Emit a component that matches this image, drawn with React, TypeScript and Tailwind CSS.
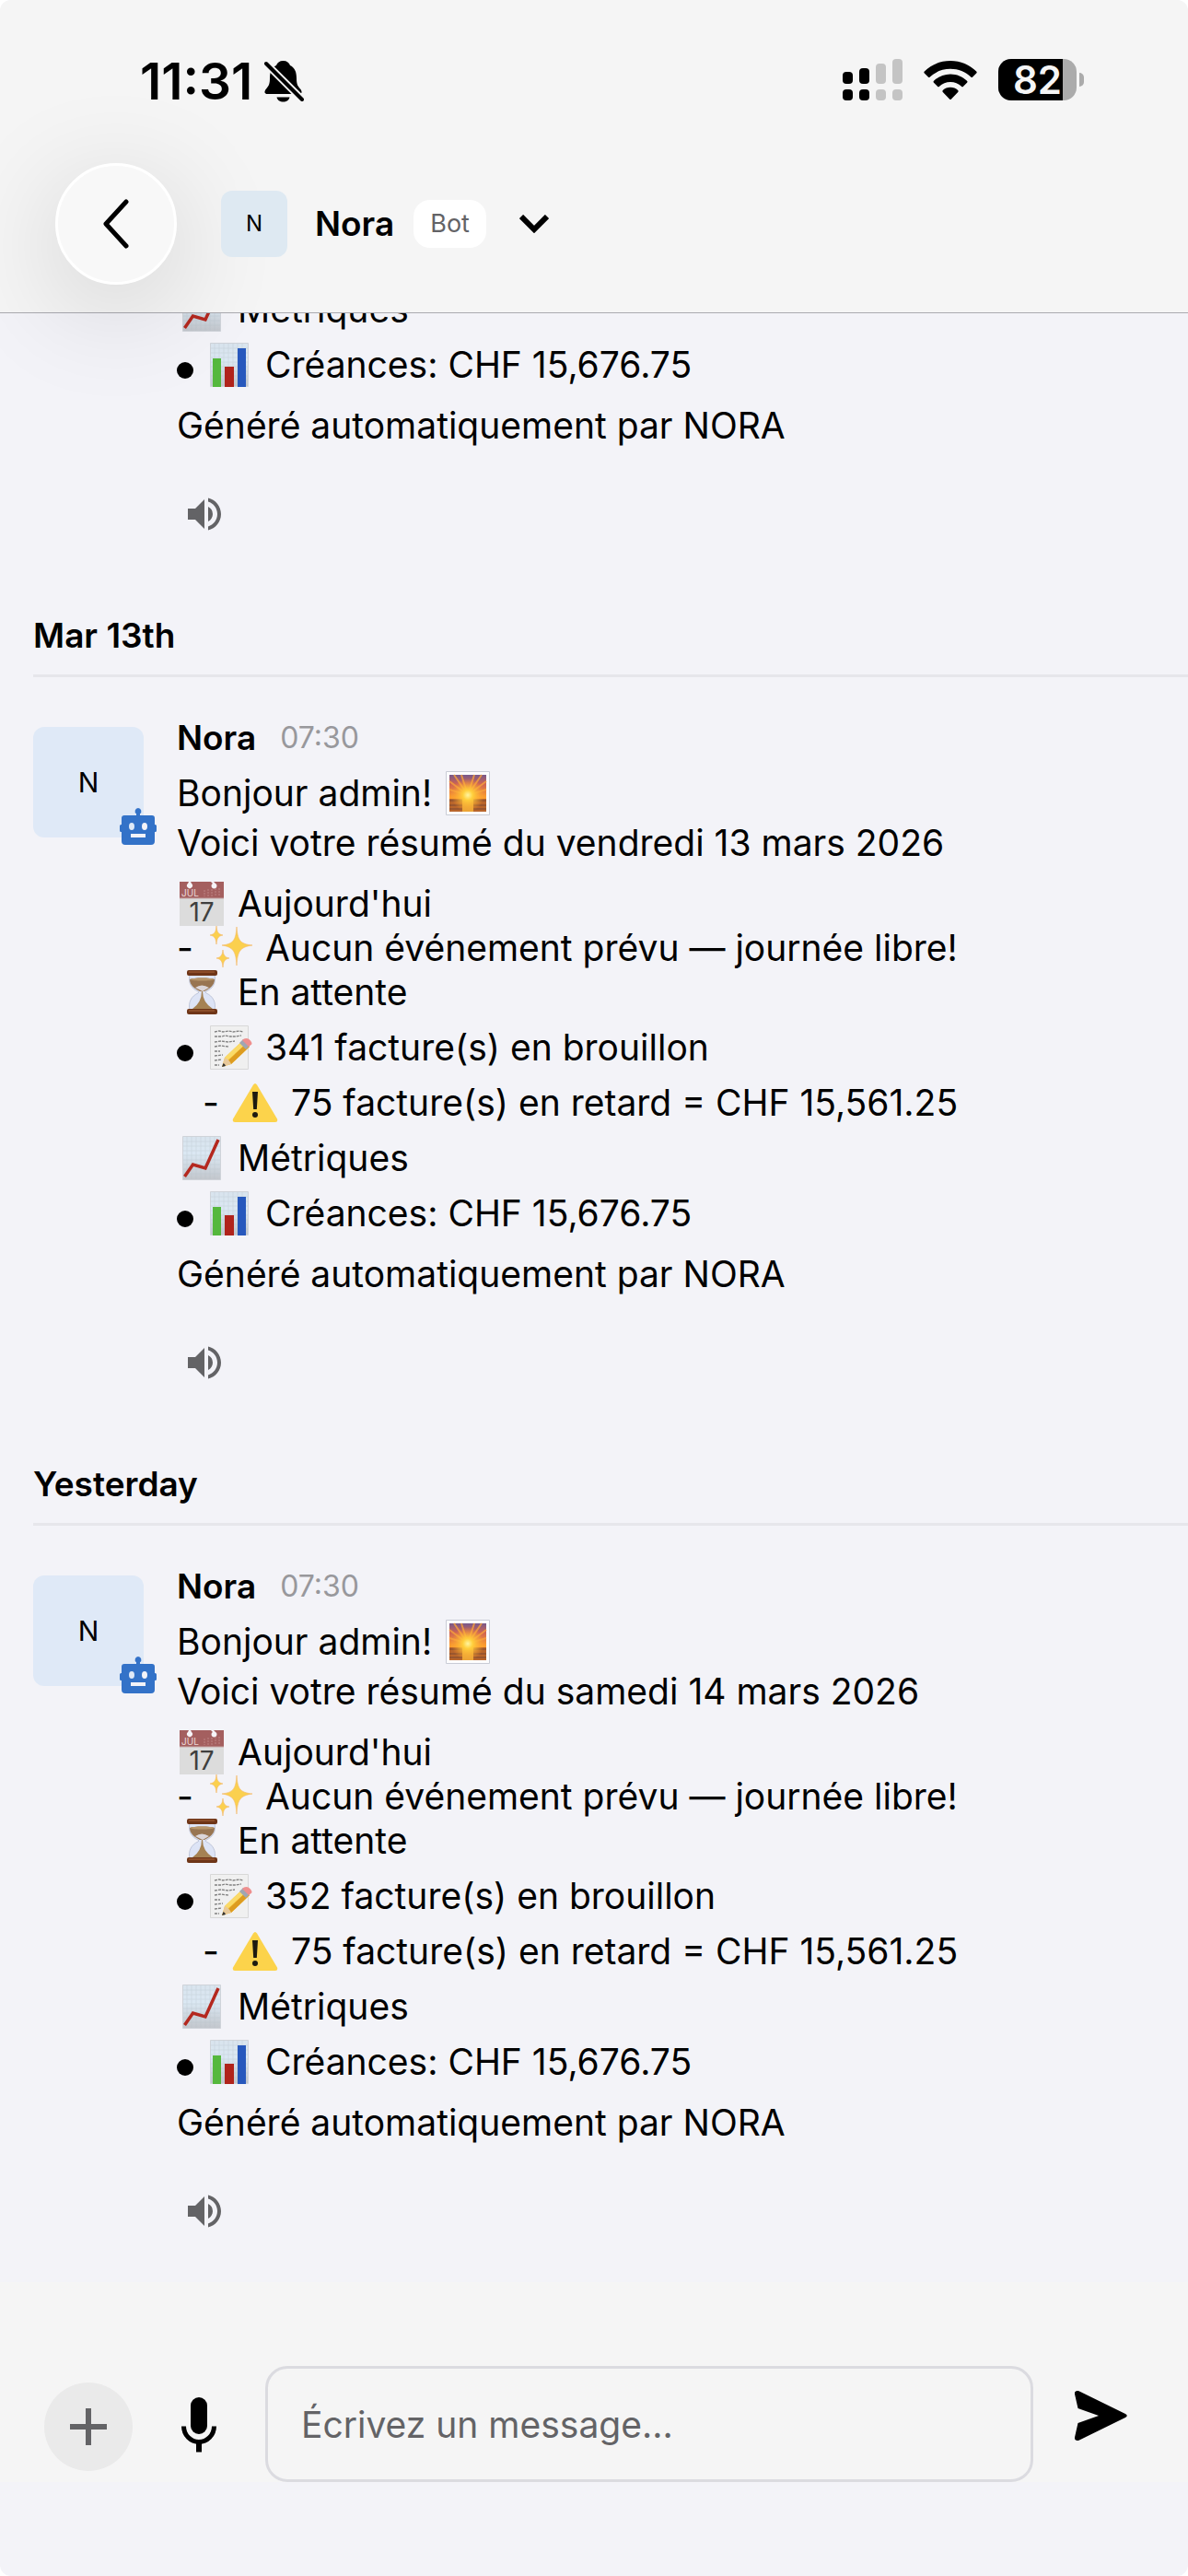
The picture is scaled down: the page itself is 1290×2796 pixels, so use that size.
import type { ReactNode } from "react";
import { MdVolumeUp } from "react-icons/md";

type EmojiName =
  | "sunrise"
  | "calendar"
  | "sparkles"
  | "hourglass"
  | "memo"
  | "warning"
  | "trend"
  | "bars";

type Report = {
  day: string;
  date: string;
  drafts: number;
};

const reports: Report[] = [
  { day: "Mar 13th", date: "vendredi 13 mars 2026", drafts: 341 },
  { day: "Yesterday", date: "samedi 14 mars 2026", drafts: 352 },
];

export default function App() {
  return (
    <div className="bg-white font-['Inter',sans-serif] text-black">
      <div className="flex h-screen flex-col overflow-hidden rounded-xl bg-[#f3f3f8]">
        <Header />

        {/* Message list, pinned to the newest entry */}
        <main className="flex min-h-0 flex-1 flex-col justify-end overflow-hidden pb-[53px]">
          <div className="shrink-0 pl-[192px]">
            <Metrics />
          </div>
          {reports.map((report) => (
            <section key={report.day} className="shrink-0 pl-9 pt-[84px]">
              <h2 className="border-b-3 border-[#e6e6eb] pb-[18px] text-[37px] font-semibold leading-[48px]">
                {report.day}
              </h2>
              <Message report={report} />
            </section>
          ))}
        </main>

        <Composer />
      </div>
    </div>
  );
}

function Header() {
  return (
    <header className="relative z-10 shrink-0 border-b border-[#aaaab0] bg-[#f5f5f5] pb-[30px]">
      <div className="flex h-[177px] items-start justify-between pl-[152px] pr-[113px] pt-16">
        <div className="flex items-center gap-3">
          <span className="text-[55px] font-semibold leading-[48px]">11:31</span>
          <BellOff />
        </div>
        <div className="flex items-center gap-[23px]">
          <Signal />
          <Wifi />
          <Battery level={82} />
        </div>
      </div>

      <div className="flex items-center pl-[60px]">
        <button
          type="button"
          aria-label="Retour"
          className="flex size-[132px] items-center justify-center rounded-full border-3 border-white bg-[#f8f8f8] shadow-[0_24px_120px_rgba(0,0,0,0.16)]"
        >
          <svg viewBox="0 0 30 54" className="h-[54px] w-[30px]" fill="none" stroke="black" strokeWidth="5" strokeLinecap="round" strokeLinejoin="round">
            <path d="M26 3 4 27l22 24" />
          </svg>
        </button>
        <button type="button" className="ml-12 flex items-center">
          <span className="flex size-[72px] items-center justify-center rounded-xl bg-[#dee9f2] text-[24px]">
            N
          </span>
          <span className="ml-[30px] text-[37px] font-semibold leading-[48px]">Nora</span>
          <span className="ml-[21px] rounded-[18px] bg-white px-[18px] text-[27px] leading-[52px] text-[#636366]">
            Bot
          </span>
          <svg viewBox="0 0 32 20" className="ml-9 h-5 w-8" fill="none" stroke="black" strokeWidth="6">
            <path d="m2 2 14 14L30 2" />
          </svg>
        </button>
      </div>
    </header>
  );
}

function Message({ report }: { report: Report }) {
  return (
    <article className="flex gap-9 pt-[42px]">
      <div className="relative mt-3 flex size-[120px] shrink-0 items-center justify-center rounded-xl bg-[#dfe9f7] text-[30px]">
        N
        <Robot />
      </div>
      <div className="text-[39px] leading-[48px]">
        <p className="flex items-center gap-[26px] pb-3">
          <strong className="text-[37px] font-semibold">Nora</strong>
          <time className="text-[32px] text-[#98989c]">07:30</time>
        </p>
        <Line>
          Bonjour admin!
          <Emoji name="sunrise" />
        </Line>
        <p className="mt-1.5">Voici votre résumé du {report.date}</p>
        <div className="mt-[18px]">
          <Line>
            <Emoji name="calendar" />
            Aujourd'hui
          </Line>
          <Line>
            -
            <Emoji name="sparkles" />
            Aucun événement prévu — journée libre!
          </Line>
          <Line>
            <Emoji name="hourglass" />
            En attente
          </Line>
        </div>
        <div className="mt-3">
          <Line>
            <Bullet />
            <Emoji name="memo" />
            {report.drafts} facture(s) en brouillon
          </Line>
        </div>
        <div className="my-3 pl-7">
          <Line>
            -
            <Emoji name="warning" />
            75 facture(s) en retard = CHF 15,561.25
          </Line>
        </div>
        <Metrics />
      </div>
    </article>
  );
}

function Metrics() {
  return (
    <div className="text-[39px] leading-[48px]">
      <Line>
        <Emoji name="trend" />
        Métriques
      </Line>
      <div className="mt-3">
        <Line>
          <Bullet />
          <Emoji name="bars" />
          Créances: CHF 15,676.75
        </Line>
      </div>
      <p className="mt-[18px]">Généré automatiquement par NORA</p>
      <button type="button" aria-label="Écouter" className="mt-12 ml-1.5 block">
        <MdVolumeUp className="size-12 text-[#636366]" />
      </button>
    </div>
  );
}

function Line({ children }: { children: ReactNode }) {
  return <p className="flex h-12 items-center gap-3 whitespace-nowrap">{children}</p>;
}

function Bullet() {
  return (
    <span aria-hidden className="flex h-12 w-[18px] items-end pb-[9px]">
      <span className="size-[18px] rounded-full bg-black" />
    </span>
  );
}

function Composer() {
  return (
    <footer className="shrink-0 pb-[102px]">
      <form className="flex items-end bg-[#f5f5f5] pl-12 pr-[54px] pt-[91px]">
        <button
          type="button"
          aria-label="Ajouter"
          className="mb-3 flex size-24 items-center justify-center rounded-full bg-[#eaeaea]"
        >
          <svg viewBox="0 0 40 40" className="size-10" stroke="#636366" strokeWidth="6">
            <path d="M20 0v40M0 20h40" />
          </svg>
        </button>
        <button type="button" aria-label="Dicter" className="mb-8 ml-[52px]">
          <svg viewBox="0 0 40 60" className="h-[60px] w-10">
            <rect x="11" y="0" width="18" height="40" rx="9" />
            <path d="M3.500 31.500C3.500 41 11 48.500 20 48.500S36.500 41 36.500 31.500" fill="none" stroke="black" strokeWidth="5" />
            <path d="M17 49h6v10.500h-6z" />
          </svg>
        </button>
        <input
          type="text"
          aria-label="Message"
          placeholder="Écrivez un message..."
          className="ml-[52px] h-[126px] min-w-0 flex-1 rounded-3xl border-3 border-[#dbdbe0] bg-transparent px-9 text-[39px] outline-none placeholder:text-[#636366]"
        />
        <button type="submit" aria-label="Envoyer" className="mb-11 ml-8 px-3">
          <svg viewBox="0 0 58 56" className="h-14 w-[58px]">
            <path d="M1 4.500C.5 1.500 3 .3 5.500 1.300L56 26q3.500 2 0 4L5.500 54.700C3 55.700.5 54.500 1 51.500L4.500 36 27 28 4.500 20Z" />
          </svg>
        </button>
      </form>
    </footer>
  );
}

/* Status bar glyphs */

function BellOff() {
  return (
    <svg viewBox="0 0 44 46" className="h-[46px] w-11">
      <path d="M21.500 1c-4 0-6.500 2-7.500 5C8.500 8.500 7 14 7 20c0 6-1 8-4 11.500C.5 34.500 1 37 4.500 37h34c3.500 0 4-2.500 1.500-5.500-3-3.500-4-5.500-4-11.500 0-6-1.500-11.500-7-14-1-3-3.500-5-7.500-5Z" />
      <path d="M14.500 40.500h14c-.5 3-3.500 5-7 5s-6.500-2-7-5Z" />
      <path d="m3 4 39 39" stroke="#f5f5f5" strokeWidth="8" />
      <path d="m3 4 39 39" stroke="black" strokeWidth="4" strokeLinecap="round" />
    </svg>
  );
}

function Signal() {
  return (
    <svg viewBox="0 0 65 45" className="h-[45px] w-[65px]">
      <rect x="0" y="14" width="11" height="13" rx="4" />
      <rect x="18" y="10" width="11" height="17" rx="4" />
      <rect x="36" y="5" width="11" height="22" rx="4" fill="#c4c4c4" />
      <rect x="54" y="0" width="11" height="27" rx="4" fill="#c4c4c4" />
      <rect x="0" y="33" width="11" height="12" rx="4" />
      <rect x="18" y="33" width="11" height="12" rx="4" />
      <rect x="36" y="33" width="11" height="12" rx="4" fill="#c4c4c4" />
      <rect x="54" y="33" width="11" height="12" rx="4" fill="#c4c4c4" />
    </svg>
  );
}

function Wifi() {
  return (
    <svg viewBox="0 0 58 44" className="h-11 w-[58px]">
      <path d="M29 1C18 1 8 5.300.8 12.600q-1 1 0 2l4 4q1 1 2 0C12.600 13 20.300 9.800 29 9.800S45.400 13 51.200 18.600q1 1 2 0l4-4q1-1 0-2C50 5.300 40 1 29 1Z" />
      <path d="M29 15.500c-7 0-13.300 2.800-18 7.200q-1 1 0 2l4 4q1 1 2 0C20.200 25.800 24.400 24 29 24s8.800 1.800 12 4.700q1 1 2 0l4-4q1-1 0-2c-4.700-4.400-11-7.200-18-7.200Z" />
      <path d="M29 29.800c-3.200 0-6 1.200-8.200 3.200q-1 1 0 2l7.200 7.500q1 1 2 0l7.200-7.500q1-1 0-2c-2.200-2-5-3.200-8.200-3.200Z" />
    </svg>
  );
}

function Battery({ level }: { level: number }) {
  return (
    <div className="flex items-center gap-[3px]">
      <div className="relative w-[85px]">
        <div className="h-[45px] overflow-hidden rounded-[14px] bg-[#ababab]">
          <div className="h-full bg-black" style={{ width: `${level}%` }} />
        </div>
        <span className="absolute inset-0 flex items-center justify-center text-[42px] font-semibold leading-none text-[#f5f5f5]">
          {level}
        </span>
      </div>
      <div className="h-[15px] w-[5px] rounded-r-full bg-[#ababab]" />
    </div>
  );
}

function Robot() {
  return (
    <svg viewBox="0 0 40 40" className="absolute -bottom-2 -right-3.5 size-10">
      <path
        fill="#3372c8"
        fillRule="evenodd"
        d="M20 0a3.500 3.500 0 0 1 2 6.300V8h13a3 3 0 0 1 3 3v7h.5A1.500 1.500 0 0 1 40 19.500v5a1.500 1.500 0 0 1-1.500 1.500H38v10a4 4 0 0 1-4 4H6a4 4 0 0 1-4-4V26h-.5A1.500 1.500 0 0 1 0 24.500v-5A1.500 1.500 0 0 1 1.500 18H2v-7a3 3 0 0 1 3-3h13V6.300A3.500 3.500 0 0 1 20 0Z"
      />
      <ellipse cx="13" cy="20" rx="3" ry="4" fill="#dfe9f7" />
      <ellipse cx="27" cy="20" rx="3" ry="4" fill="#f3f3f8" />
      <path d="M12 28h16v4H12z" fill="#f3f3f8" />
    </svg>
  );
}

/* Inline emoji drawings, all on a 54 x 48 box */

const emojiArt: Record<EmojiName, ReactNode> = {
  sunrise: (
    <>
      <defs>
        <linearGradient id="sky" x1="0" y1="0" x2="0" y2="1">
          <stop offset="0" stopColor="#76598c" />
          <stop offset=".25" stopColor="#cf6352" />
          <stop offset=".6" stopColor="#fb9d2e" />
        </linearGradient>
        <radialGradient id="sun" cx=".5" cy=".55" r=".45">
          <stop offset="0" stopColor="#fff5a0" />
          <stop offset=".3" stopColor="#ffcf3c" />
          <stop offset="1" stopColor="#ffa62f" stopOpacity="0" />
        </radialGradient>
      </defs>
      <path d="M3.500.5h47v47h-47z" fill="#fdfdfe" stroke="#c9ccd6" />
      <path d="M7 4h40v40H7z" fill="url(#sky)" />
      <path d="M27 26 7 11M27 26 12 4M27 26 20 4M27 26l7-22M27 26 42 4M27 26l20-15M27 26 7 20M27 26l20-6" stroke="#f7a13b" strokeWidth="2" opacity=".8" />
      <path d="M7 30h40v14H7z" fill="#b8652c" />
      <path d="M7 32h40M7 37h40M7 41h40" stroke="#8f5231" strokeWidth="1.500" />
      <path d="M21 30h12v14H21z" fill="#eba537" />
      <path d="M7 4h40v40H7z" fill="url(#sun)" />
    </>
  ),
  calendar: (
    <>
      <path d="M3 0h48v48H3z" fill="#dcdcdc" />
      <path d="M3 0h48v18H3z" fill="#a45f5f" />
      <path d="M3 18h48" stroke="#c6a7a7" />
      <path d="M13 0h2l1 2a3 3 0 1 1-4 0ZM37 0h3l2 2a3 3 0 1 1-3 0Z" fill="#f6f4f8" />
      <path d="M30 9v7M34 8v8M38 8v8M42 7v9M46 7v9" stroke="#bd8585" strokeDasharray="2 1" />
      <text x="5" y="16" fontSize="10" fill="#ecd9d9">JUL</text>
      <text x="27" y="43" fontSize="28" textAnchor="middle" fill="#3f3f3f">17</text>
    </>
  ),
  sparkles: (
    <g transform="translate(5 0)" fill="#fbd04e" stroke="#f3b76a" strokeWidth=".6">
      <path d="M30 1c1 14 3 18.500 17 20-14 2-16 7-17 22-1-15-3-20-16-22 13-1.500 15-6 16-20Z" />
      <path d="M8 0c.6 6 1.500 9 7 10-5.500 1-6.400 4-7 10-.6-6-1.500-9-7-10C6.500 9 7.400 6 8 0Z" />
      <path d="M15 26c.6 5 1.500 8 7 9-5.500 1-6.400 4-7 10-.6-6-1.500-9-7-10 5.500-1 6.400-4 7-9Z" />
    </g>
  ),
  hourglass: (
    <>
      <path d="M14 5h27c2 9-2 15-9 18q-2 1 0 2c7 3 11 10 9 18H14c-2-8 2-15 9-18q2-1 0-2C16 20 12 14 14 5Z" fill="#dde4f6" stroke="#b5bdd2" strokeWidth=".8" />
      <path d="M14 10c4-2 23-2 27 0 0 6-5 10-11 13h-5c-6-3-11-7-11-13Z" fill="#987551" />
      <path d="M14 10c4-2 23-2 27 0-4 2-23 2-27 0Z" fill="#b8976c" />
      <path d="M28 23q0 12 11 19H17q10-7 10-19Z" fill="#a58253" />
      <path d="M20 19q7-5 15 0l-7 4Z" fill="#eceffb" opacity=".8" />
      <rect x="11" y="0" width="33" height="6" rx="2" fill="#6e3517" />
      <rect x="11" y="42" width="33" height="6" rx="2" fill="#6e3517" />
      <path d="M13 2h28M13 44h28" stroke="#a9673c" />
    </>
  ),
  memo: (
    <>
      <path d="M6.500.5h41v47h-41z" fill="#f0f0f0" stroke="#d8d8d8" />
      <path d="M11 7l5-1 4 1 6-1 5 1 7-1 4 1M11 12h8l3-1 6 1h6l6-1M11 18l7-1 8 1 7-1M11 23l6-1 9 1M11 28h6M11 33l9-1M11 38l8-1M11 43h5" fill="none" stroke="#808080" strokeWidth="1.300" strokeDasharray="3 1" />
      <path d="m19 45 3-10 20-19 7 7-20 19Z" fill="#f4c02f" />
      <path d="m22 35 3 3 20-18-3-4Z" fill="#fada68" />
      <path d="m29 42-4-3 20-19 4 3Z" fill="#dd9c20" />
      <path d="m19 45 3-10q5 2 7 7Z" fill="#e8c99a" />
      <path d="m19 45 1.500-4q2 1 2.500 3Z" fill="#333" />
      <path d="m38 19 4-4 7 7-4 4Z" fill="#9fa6b2" />
      <path d="m41 16 2-1.500q4-1.500 7 2t0 5L48 23Z" fill="#ee8f8e" />
    </>
  ),
  warning: (
    <>
      <path d="M25 4.500q2-3 4 0l22 37q1 3.500-2 3.500H5q-3 0-2-3.500Z" fill="#fcd34b" />
      <path d="M24 12h6l-1.200 19h-3.600Z" fill="#1d1b10" />
      <circle cx="27" cy="37" r="3" fill="#1d1b10" />
    </>
  ),
  trend: (
    <>
      <GridPaper />
      <path d="m8.500 44 9-13L31 35 45 4" fill="none" stroke="#b4281f" strokeWidth="3.500" />
    </>
  ),
  bars: (
    <>
      <GridPaper />
      <path d="M9 17h9v31H9z" fill="#55b83d" />
      <path d="M22 26h10v22H22z" fill="#b0231b" />
      <path d="M36 6h9v42h-9z" fill="#2758bd" />
    </>
  ),
};

function GridPaper() {
  return (
    <>
      <defs>
        <linearGradient id="paper" x1="0" y1="0" x2="0" y2="1">
          <stop offset="0" stopColor="#d9e4ee" />
          <stop offset=".4" stopColor="#dbe8f3" />
          <stop offset="1" stopColor="#c2c6cc" />
        </linearGradient>
      </defs>
      <path d="M6.500.5h41v47h-41z" fill="url(#paper)" stroke="#cfd3d9" />
      <path d="M11 1v46M16 1v46M21 1v46M26 1v46M31 1v46M36 1v46M41 1v46M7 6h40M7 11h40M7 16h40M7 21h40M7 26h40M7 31h40M7 36h40M7 41h40" stroke="#b4c0cb" strokeWidth=".5" opacity=".6" />
    </>
  );
}

function Emoji({ name }: { name: EmojiName }) {
  return (
    <svg viewBox="0 0 54 48" aria-hidden className="h-12 w-[54px] shrink-0 overflow-visible">
      {emojiArt[name]}
    </svg>
  );
}
